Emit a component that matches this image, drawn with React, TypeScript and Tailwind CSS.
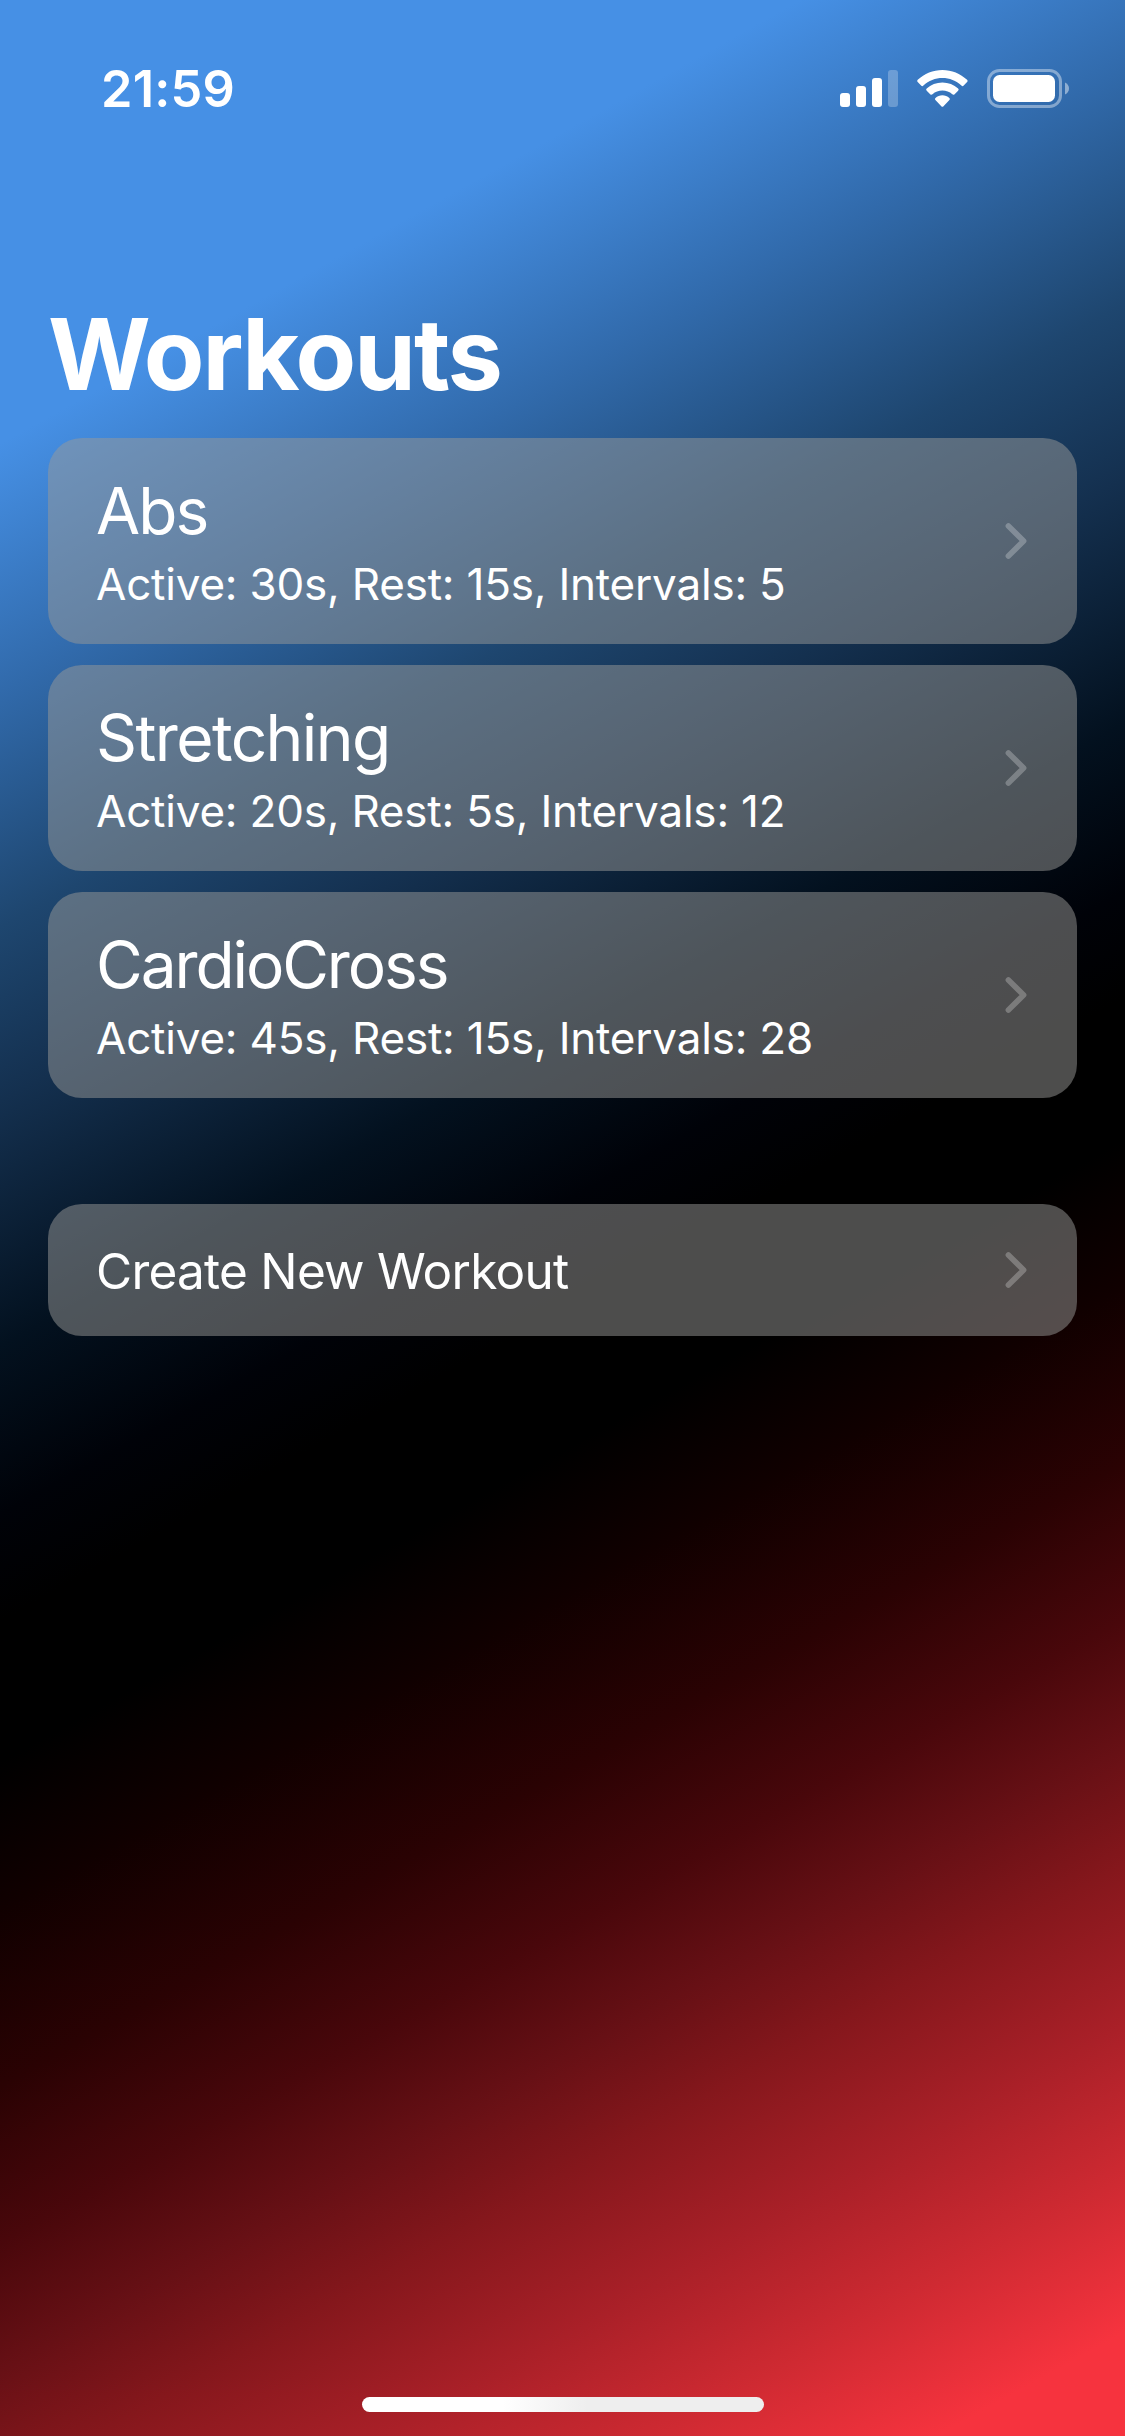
import React from "react";

const workouts = [
  { name: "Abs", detail: "Active: 30s, Rest: 15s, Intervals: 5", nameClass: "tracking-[-1.9px]" },
  { name: "Stretching", detail: "Active: 20s, Rest: 5s, Intervals: 12", nameClass: "tracking-[-1.6px]" },
  { name: "CardioCross", detail: "Active: 45s, Rest: 15s, Intervals: 28", nameClass: "tracking-[-2.1px]" },
];

function Chevron() {
  return (
    <svg width="22" height="36" viewBox="0 0 22 36" fill="none" className="shrink-0">
      <path d="M3.400 3 18.600 18 3.400 33" stroke="#fff" strokeOpacity="0.26" strokeWidth="5.6" strokeLinecap="round" strokeLinejoin="round" />
    </svg>
  );
}

function StatusIcons() {
  return (
    <svg width="232" height="42" viewBox="838 68 232 42" fill="#fff">
      <rect x="840" y="93" width="10" height="14" rx="3" />
      <rect x="856" y="86" width="10" height="21" rx="3" />
      <rect x="872" y="78" width="10" height="29" rx="3" />
      <rect x="888" y="70" width="10" height="37" rx="3" fillOpacity="0.25" />
      <path d="M942.4 69.9c9.3 0 18 3.600 24.700 9.900q1.200 1.100 0 2.300l-3.400 3.500q-1.100 1.100-2.300 0c-5.200-4.900-12-7.500-19-7.500s-13.800 2.600-19 7.500q-1.200 1.100-2.300 0l-3.400-3.500q-1.200-1.200 0-2.300c6.700-6.300 15.400-9.900 24.700-9.900Z" />
      <path d="M942.400 82.500c6 0 11.500 2.200 15.700 6q1.200 1.100 0 2.200l-3.500 3.500q-1.100 1.100-2.300.1c-2.700-2.400-6.200-3.700-9.900-3.700s-7.200 1.300-9.900 3.700q-1.200 1-2.300-.1l-3.500-3.500q-1.200-1.100 0-2.200c4.200-3.800 9.700-6 15.700-6Z" />
      <path d="M942.400 95.300c2.600 0 5 .9 6.900 2.600q1.200 1.100.1 2.200l-5.900 6.100q-1.100 1.100-2.200 0l-5.900-6.100q-1.100-1.100.1-2.200c1.900-1.700 4.300-2.600 6.900-2.600Z" />
      <rect x="988.500" y="70.500" width="72" height="36" rx="11" fill="none" stroke="#fff" strokeOpacity="0.4" strokeWidth="3" />
      <rect x="993" y="75" width="62" height="27" rx="6.500" />
      <path d="M1065 82.500c2.500 1 4 3.400 4 6s-1.500 5-4 6Z" fillOpacity="0.45" />
    </svg>
  );
}

export default function App() {
  return (
    <div className="flex h-[2436px] w-[1125px] flex-col overflow-hidden bg-[linear-gradient(151deg,#4690e5_14.5%,#316aab_22.6%,#1e466f_30.3%,#14304f_36%,#03111f_44%,#000208_49.5%,#000_53%,#000_57.6%,#100000_62.4%,#2a0203_68.2%,#49070b_73.3%,#671015_77.5%,#85171c_81.3%,#aa2028_86.6%,#cf2a32_91.6%,#f6333e_96.6%)] font-['Inter','Liberation_Sans',sans-serif] text-white">
      <header className="flex h-[132px] shrink-0 items-start justify-between pr-[55px] pl-[101px]">
        <time className="mt-[59px] text-[50.5px] leading-[60px] font-semibold tracking-[0.2px]">21:59</time>
        <div className="mt-[68px]">
          <StatusIcons />
        </div>
      </header>
      <main className="flex flex-1 flex-col px-12">
        <h1 className="mt-[160px] h-[146px] text-[99px] leading-[124px] font-bold tracking-[-2px]">Workouts</h1>
        <div className="flex flex-col gap-[21px]">
          {workouts.map((w) => (
            <section key={w.name} className="flex h-[206px] items-center justify-between rounded-[34px] bg-[#9a9a98]/50 pr-[50px] pl-[48px]">
              <div className="pt-1">
                <h2 className={`text-[64px] leading-[78px] ${w.nameClass}`}>{w.name}</h2>
                <p className="mt-1 text-[44px] leading-[60px] tracking-[-0.2px]">{w.detail}</p>
              </div>
              <Chevron />
            </section>
          ))}
        </div>
        <button className="mt-[106px] flex h-[132px] items-center justify-between rounded-[34px] bg-[#9a9a98]/50 pr-[50px] pl-[48px] text-left">
          <span className="pt-[2px] text-[49.5px] leading-[60px] tracking-[-0.75px]">Create New Workout</span>
          <Chevron />
        </button>
      </main>
      <div className="mb-[24px] h-[15px] w-[402px] self-center rounded-full bg-[linear-gradient(90deg,#fff_35%,#eee_56%)]" />
    </div>
  );
}
